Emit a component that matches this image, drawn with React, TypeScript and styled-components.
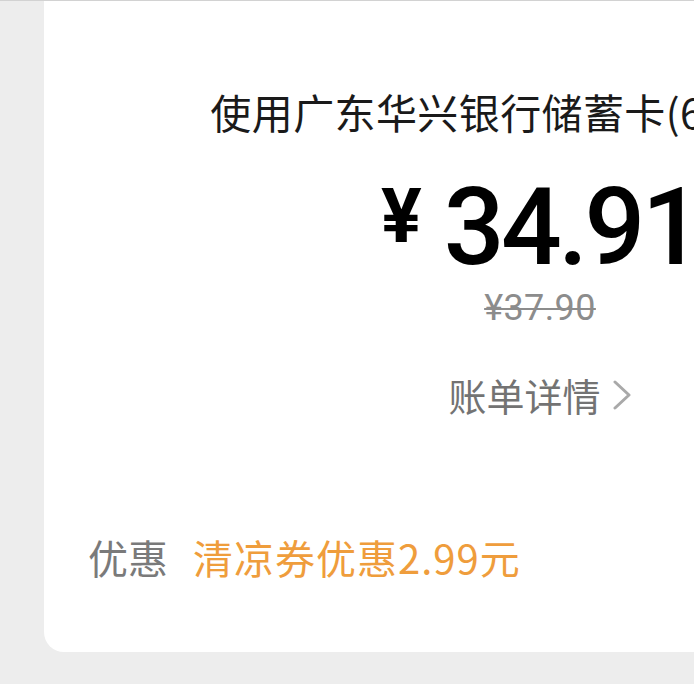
import React from "react";
import styled, { createGlobalStyle } from "styled-components";

const GlobalStyle = createGlobalStyle`
  html, body {
    margin: 0;
    padding: 0;
    background: #ededed;
    overflow: hidden;
  }
  body {
    font-family: "Noto Sans CJK SC", "Noto Sans", sans-serif;
  }
`;

const Page = styled.div`
  width: 694px;
  height: 684px;
  overflow: hidden;
  border-top: 1px solid #d2d2d2;
  box-sizing: border-box;
  background: #ededed;
`;

const Card = styled.div`
  margin-left: 44px;
  width: 992px;
  height: 651px;
  background: #fff;
  border-bottom-left-radius: 20px;
  display: flex;
  flex-direction: column;
  align-items: center;
  padding-top: 86px;
  box-sizing: border-box;
`;

const Title = styled.div`
  font-size: 41px;
  line-height: 48px;
  color: #1a1a1a;
  white-space: nowrap;
  letter-spacing: 0.4px;
`;

const Amount = styled.div`
  display: flex;
  align-items: flex-start;
  margin-top: 43px;
  color: #000;
  font-family: Roboto, "Noto Sans", sans-serif;
  font-weight: 500;
`;

const Yen = styled.span`
  font-size: 76px;
  line-height: 76px;
  margin-right: 22px;
  font-weight: 700;
`;

const Figure = styled.span`
  font-size: 107px;
  line-height: 100px;
  letter-spacing: -3.5px;
`;

const Original = styled.div`
  margin-top: 10px;
  font-family: Roboto, "Noto Sans", sans-serif;
  font-size: 36px;
  line-height: 40px;
  color: #8c8c8c;
  letter-spacing: 0.4px;
  text-decoration: line-through;
  text-decoration-thickness: 2px;
`;

const DetailLink = styled.div`
  display: flex;
  align-items: center;
  gap: 11px;
  margin-top: 45px;
  font-size: 38px;
  line-height: 44px;
  color: #737373;
`;

const Discount = styled.div`
  align-self: flex-start;
  display: flex;
  gap: 25px;
  margin-top: 118px;
  padding-left: 44px;
  font-size: 40px;
  line-height: 44px;
  white-space: nowrap;
`;

const Label = styled.span<{ $accent?: boolean }>`
  color: ${(p) => (p.$accent ? "#ef9d3c" : "#7a7a7a")};
  letter-spacing: ${(p) => (p.$accent ? "1px" : "0")};
`;

function Chevron() {
  return (
    <svg width="20" height="30" viewBox="0 0 20 30" fill="none">
      <path d="M3 2 L17 15 L3 28" stroke="#a9a9a9" strokeWidth="3" strokeLinecap="round" strokeLinejoin="round" />
    </svg>
  );
}

export default function App() {
  return (
    <>
      <GlobalStyle />
      <Page>
        <Card>
          <Title>使用广东华兴银行储蓄卡(6217)付款</Title>
          <Amount>
            <Yen>¥</Yen>
            <Figure>34.91</Figure>
          </Amount>
          <Original>¥37.90</Original>
          <DetailLink>
            <span>账单详情</span>
            <Chevron />
          </DetailLink>
          <Discount>
            <Label>优惠</Label>
            <Label $accent>清凉券优惠2.99元</Label>
          </Discount>
        </Card>
      </Page>
    </>
  );
}
